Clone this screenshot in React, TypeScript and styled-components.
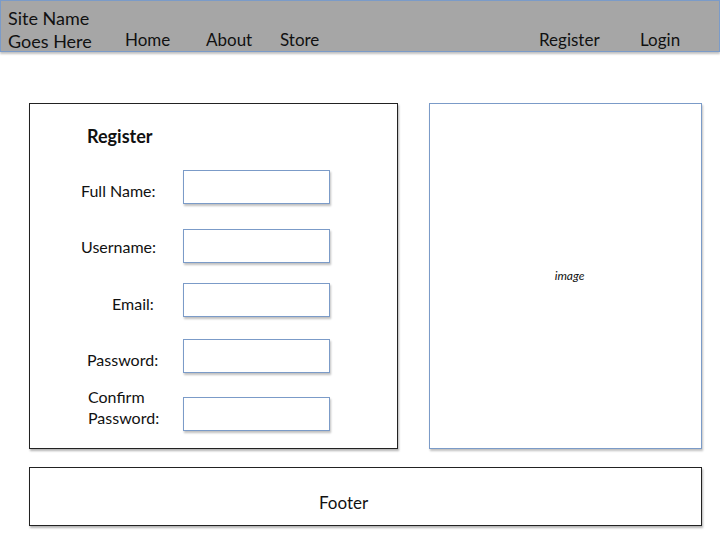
import React from "react";
import styled, { createGlobalStyle } from "styled-components";

const GlobalStyle = createGlobalStyle`
  html, body {
    margin: 0;
    padding: 0;
    background: #ffffff;
  }
  body {
    font-family: Lato, "Open Sans", sans-serif;
    color: #111111;
  }
`;

const Page = styled.div`
  width: 720px;
  height: 540px;
  overflow: hidden;
`;

const Header = styled.header`
  height: 52px;
  box-sizing: border-box;
  background: #a6a6a6;
  border: 1px solid #7b9bc8;
  box-shadow: 0 2px 2px rgba(0, 0, 0, 0.25);
  display: flex;
  align-items: flex-end;
  padding: 0 0 0 7px;
`;

const SiteName = styled.div`
  width: 117px;
  font-size: 18px;
  line-height: 23px;
  margin-bottom: -2px;
`;

const NavLink = styled.a<{ $w: number }>`
  width: ${(p) => p.$w}px;
  font-size: 17px;
  line-height: 23px;
  color: #111111;
  text-decoration: none;
`;

const Spacer = styled.div`
  flex: 1;
`;

const Main = styled.main`
  display: flex;
  padding: 51px 0 0 29px;
  gap: 31px;
`;

const Card = styled.section`
  width: 369px;
  height: 346px;
  box-sizing: border-box;
  border: 1px solid #222222;
  box-shadow: 1px 2px 2px rgba(0, 0, 0, 0.3);
  padding: 20px 0 0 0;
`;

const Title = styled.h3`
  margin: 0 0 0 57px;
  font-size: 18px;
  line-height: 24px;
  font-weight: 700;
`;

const Row = styled.div<{ $top: number }>`
  display: flex;
  align-items: center;
  margin-top: ${(p) => p.$top}px;
`;

const Label = styled.label<{ $indent: number; $dy?: number }>`
  width: 153px;
  box-sizing: border-box;
  padding-left: ${(p) => p.$indent}px;
  font-size: 16px;
  line-height: 21px;
  position: relative;
  top: ${(p) => p.$dy ?? 0}px;
`;

const Input = styled.input`
  width: 147px;
  height: 34px;
  box-sizing: border-box;
  border: 1px solid #7b9bc8;
  box-shadow: 1px 2px 2px rgba(0, 0, 0, 0.25);
  background: #ffffff;
  outline: none;
`;

const ImageBox = styled.div`
  width: 273px;
  height: 346px;
  box-sizing: border-box;
  border: 1px solid #7b9bc8;
  box-shadow: 1px 2px 2px rgba(0, 0, 0, 0.25);
  display: flex;
  align-items: center;
  justify-content: center;
  font-size: 12px;
  font-style: italic;
  padding-left: 8px;
  padding-bottom: 2px;
`;

const Footer = styled.footer`
  margin: 18px 0 0 29px;
  width: 673px;
  height: 59px;
  box-sizing: border-box;
  border: 1px solid #222222;
  box-shadow: 1px 2px 2px rgba(0, 0, 0, 0.3);
  display: flex;
  align-items: center;
  justify-content: center;
  font-size: 17px;
  padding: 11px 44px 0 0;
`;

const fields = [
  { label: "Full Name:", indent: 51, top: 22, dy: 3 },
  { label: "Username:", indent: 51, top: 25, dy: 0 },
  { label: "Email:", indent: 82, top: 20, dy: 3 },
  { label: "Password:", indent: 57, top: 22, dy: 3 },
  { label: "Confirm Password:", indent: 58, top: 20, dy: -7 },
];

export default function App() {
  return (
    <Page>
      <GlobalStyle />
      <Header>
        <SiteName>
          Site Name
          <br />
          Goes Here
        </SiteName>
        <NavLink $w={81}>Home</NavLink>
        <NavLink $w={74}>About</NavLink>
        <NavLink $w={80}>Store</NavLink>
        <Spacer />
        <NavLink $w={101}>Register</NavLink>
        <NavLink $w={79}>Login</NavLink>
      </Header>
      <Main>
        <Card>
          <Title>Register</Title>
          {fields.map((f) => (
            <Row key={f.label} $top={f.top}>
              <Label $indent={f.indent} $dy={f.dy}>
                {f.label === "Confirm Password:" ? (
                  <>
                    Confirm
                    <br />
                    Password:
                  </>
                ) : (
                  f.label
                )}
              </Label>
              <Input type="text" />
            </Row>
          ))}
        </Card>
        <ImageBox>image</ImageBox>
      </Main>
      <Footer>Footer</Footer>
    </Page>
  );
}
